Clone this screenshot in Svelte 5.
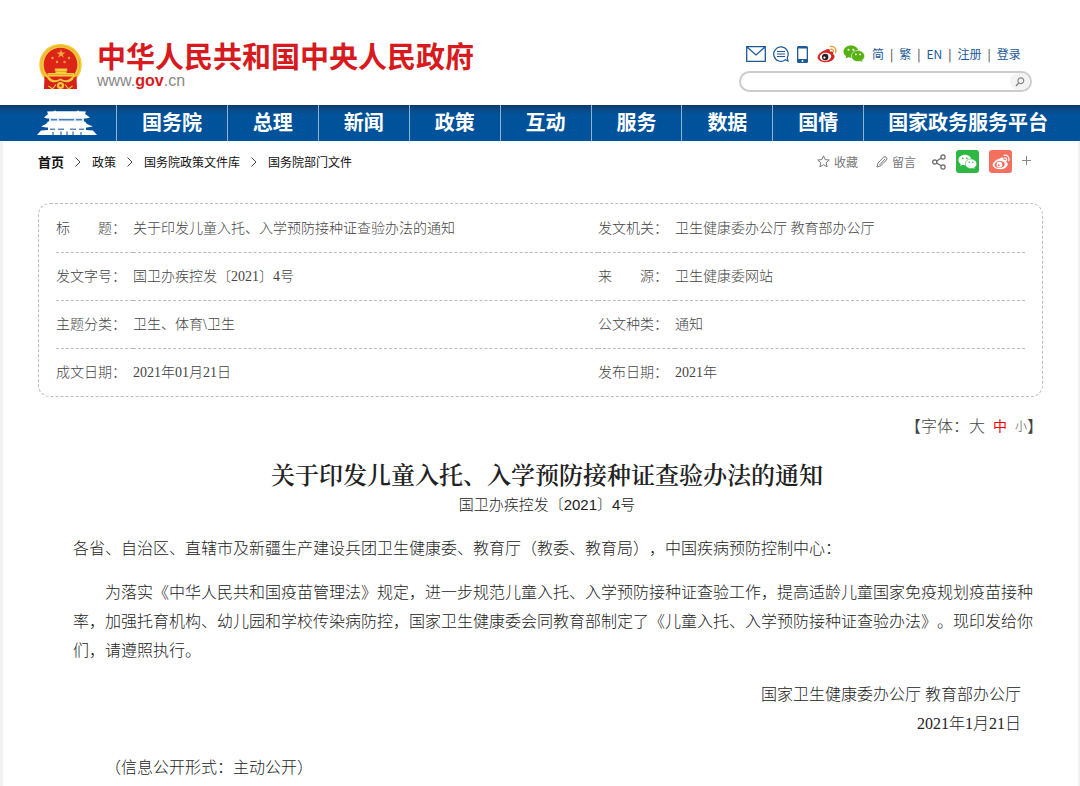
<script lang="ts">
  type Field = { label: string; value: string };

  const nav = ['国务院', '总理', '新闻', '政策', '互动', '服务', '数据', '国情', '国家政务服务平台'];
  const langs = ['简', '繁', 'EN', '注册', '登录'];
  const crumbs = ['首页', '政策', '国务院政策文件库', '国务院部门文件'];

  const rows: [Field, Field][] = [
    [
      { label: '标　　题：', value: '关于印发儿童入托、入学预防接种证查验办法的通知' },
      { label: '发文机关：', value: '卫生健康委办公厅 教育部办公厅' }
    ],
    [
      { label: '发文字号：', value: '国卫办疾控发〔2021〕4号' },
      { label: '来　　源：', value: '卫生健康委网站' }
    ],
    [
      { label: '主题分类：', value: '卫生、体育\\卫生' },
      { label: '公文种类：', value: '通知' }
    ],
    [
      { label: '成文日期：', value: '2021年01月21日' },
      { label: '发布日期：', value: '2021年' }
    ]
  ];

  const sizes = [
    { id: 'large', text: '大' },
    { id: 'medium', text: '中' },
    { id: 'small', text: '小' }
  ];

  let query = $state('');
  let size = $state('medium');
</script>

{#snippet weibo(body: string, wave: string, eye: string)}
  <path d="M8.500 5C11.500 3 13.500 4.500 12.800 6.800C15.200 6 16.800 7 15.900 9C18.500 10.200 18 13.500 15 15.500C10.500 18.500 2 17.500 .7 13C0 10 4.500 6.300 8.500 5Z" fill={body} />
  <ellipse cx="8.500" cy="11.800" rx="5.800" ry="4" fill={eye} transform="rotate(-8 8.500 11.800)" />
  <circle cx="8.200" cy="12" r="3.200" fill={body === '#fff' ? '#fff' : '#222'} />
  <circle cx="7.400" cy="12.600" r="1.100" fill={eye} />
  <path d="M13.500 1.500C17.500 .8 19.800 4 18.600 7.500M13.800 4.300C15.600 4 16.700 5.300 16.200 6.900" fill="none" stroke={wave} stroke-width="1.400" stroke-linecap="round" />
{/snippet}

{#snippet wechat(fill: string, eye: string)}
  <path d="M8 .5C3.800 .5 .5 3.200 .5 6.600C.5 8.600 1.500 10.200 3.200 11.300L2.500 13.500L5.200 12.200C6.200 12.500 7.100 12.700 8 12.700C12.200 12.700 15.500 10 15.500 6.600C15.500 3.200 12.200 .5 8 .5Z" {fill} />
  <path d="M15 5.500C11.200 5.500 8.400 8 8.400 11C8.400 14.100 11.300 16.600 15 16.600C15.800 16.600 16.600 16.500 17.300 16.200L19.700 17.500L19.100 15.400C20.600 14.400 21.600 12.800 21.600 11C21.600 8 18.700 5.500 15 5.500Z" {fill} stroke={eye} stroke-width=".6" />
  <g fill={eye}>
    <circle cx="5.500" cy="4.800" r="1" /><circle cx="10.300" cy="4.800" r="1" />
    <circle cx="12.900" cy="9.400" r=".9" /><circle cx="17.100" cy="9.400" r=".9" />
  </g>
{/snippet}

<header>
  <a class="brand" href="#home">
    <svg width="43" height="46" viewBox="0 0 43 46" aria-hidden="true">
      <path d="M21.500 0C9.500 0 .3 9 .3 20.500C.3 28 3.500 33 7.500 37H35.500C39.500 33 42.700 28 42.700 20.500C42.700 9 33.500 0 21.500 0Z" fill="#f5c93a" />
      <path d="M21.500 2C11 2 2.300 10 2.300 20.500C2.300 27 5 31 8 34M21.500 2C32 2 40.700 10 40.700 20.500C40.700 27 38 31 35 34" fill="none" stroke="#e5a52f" stroke-width=".8" />
      <circle cx="21.500" cy="20.500" r="16.800" fill="#dd2419" />
      <path d="M22 5.200L23.100 8.400H26.500L23.800 10.400L24.800 13.600L22 11.700L19.200 13.600L20.200 10.400L17.500 8.400H20.900Z" fill="#f7a93c" />
      <g fill="#f7a93c">
        <circle cx="13.500" cy="14" r="1.200" /><circle cx="30" cy="14" r="1.200" />
        <circle cx="18" cy="18" r="1.200" /><circle cx="25.500" cy="18" r="1.200" />
      </g>
      <path d="M16 24.500H28L28.500 26.500H27.500V29H35V32.500H8.500V29H16.500V26.500H15.500Z" fill="#f7cf3c" />
      <path d="M16.500 27.500H27.500M9 30.500H34" stroke="#e8872a" stroke-width=".6" />
      <path d="M5.500 32C11 37 16 33 21.500 36C27 33 32 37 37.500 32L38 45H5L5.500 32Z" fill="#d5201b" />
      <path d="M9 34C13 38.500 17 38 21.500 35.500C26 38 30 38.500 34 34" fill="none" stroke="#f6ca3a" stroke-width="2" />
      <path d="M9.500 42L13.500 45L17 40.500M33.500 42L29.500 45L26 40.500" fill="none" stroke="#f6ca3a" stroke-width="1.200" />
      <circle cx="21.500" cy="41.500" r="3.500" fill="#f6ca3a" />
      <circle cx="21.500" cy="41.500" r="1.300" fill="#d5201b" />
    </svg>
    <span class="brand-text">
      <strong>中华人民共和国中央人民政府</strong>
      <span class="domain">www.<b>gov</b>.cn</span>
    </span>
  </a>

  <div class="tools">
    <div class="links">
      <a href="#mail" aria-label="邮箱">
        <svg width="20" height="16" viewBox="0 0 20 16"><path d="M.7 .7H19.300V15.300H.7ZM1 1L10 9L19 1" fill="none" stroke="#1c5a98" stroke-width="1.300" /></svg>
      </a>
      <a href="#chat" aria-label="客户端">
        <svg width="16" height="16" viewBox="0 0 16 16" fill="none" stroke="#1c5a98" stroke-width="1.200"><path d="M12.500 13.700A7.200 7.200 0 1 1 14.300 11.500L15 15ZM4 5.500H12M4 8H12M4 10.500H12" /></svg>
      </a>
      <a class="phone" href="#phone" aria-label="手机版">
        <svg width="11" height="17" viewBox="0 0 11 17"><rect width="11" height="17" rx="1.500" fill="#1c5a98" /><path d="M1.300 2.500H9.700V13H1.300Z" fill="#fff" /><circle cx="5.500" cy="15" r=".9" fill="#fff" /></svg>
      </a>
      <a class="weibo" href="#weibo" aria-label="微博">
        <svg width="20" height="18" viewBox="0 0 20 18">{@render weibo('#d8231f', '#f09a37', '#fff')}</svg>
      </a>
      <a href="#wechat" aria-label="微信">
        <svg width="22" height="18" viewBox="0 0 22 18">{@render wechat('#55b211', '#fff')}</svg>
      </a>
      <span class="langs">
        {#each langs as lang, i}
          {#if i > 0}<i>|</i>{/if}
          <a href="#{lang}">{lang}</a>
        {/each}
      </span>
    </div>
    <form class="search" onsubmit={(e) => e.preventDefault()}>
      <input type="text" aria-label="搜索" bind:value={query} />
      <button aria-label="提交搜索">
        <svg width="10" height="10" viewBox="0 0 10 10" fill="none" stroke="#888"><circle cx="5.800" cy="3.800" r="2.900" stroke-width="1.200" /><path d="M3.700 6L1 9" stroke-width="1.500" /></svg>
      </button>
    </form>
  </div>
</header>

<nav>
  <a class="home" href="#home" aria-label="首页">
    <svg width="60" height="26" viewBox="0 0 60 26" fill="#fff">
      <path d="M10 1.500L17 1.300L18 .3L19 1.300H40L41 .3L42 1.300L49 1.500L48 4L53 7.500L49 8.500H10L7 7.500L11 4Z" />
      <path d="M12 8H47V12H12Z" fill="#dcebf7" />
      <path d="M11 11.500H48L50 14L56 16.500L50 17.500H9L4 16.500L9 14Z" />
      <path d="M11 17H49V21H11Z" />
      <path d="M4 20.500L11 20H49L56 20.500L60 25H0Z" />
      <path d="M14 9.800H20M22 9.800H37M39 9.800H45M13 19.200H18M21 19.200H27M33 19.200H39M42 19.200H47" stroke="#0b529a" stroke-width="1" />
      <path d="M16 22V25M24 21.500V25M30 21.500V25M36 21.500V25M44 22V25" stroke="#0b529a" stroke-width="1" />
    </svg>
  </a>
  {#each nav as item, i}
    <a href="#{item}" class:first={i === 0} class:wide={i === nav.length - 1}>{item}</a>
  {/each}
</nav>

<main>
  <div class="bar">
    <div class="crumbs">
      {#each crumbs as crumb, i}
        {#if i > 0}
          <svg width="6" height="10" viewBox="0 0 6 10" aria-hidden="true"><path d="M.5 .5L5 5L.5 9.500" fill="none" stroke="#444" /></svg>
        {/if}
        <a href="#{crumb}" class:strong={i === 0}>{crumb}</a>
      {/each}
    </div>
    <div class="share">
      <button class="action">
        <svg width="13" height="13" viewBox="0 0 13 13"><path d="M6.500 .8L8.200 4.600L12.300 5L9.200 7.700L10.100 11.900L6.500 9.700L2.900 11.900L3.800 7.700L.7 5L4.800 4.600Z" fill="none" stroke="#777" /></svg>
        收藏
      </button>
      <button class="action">
        <svg width="12" height="12" viewBox="0 0 12 12"><path d="M1 11L2 7L7.500 1.200Q9 .2 10.300 1.300Q11.500 2.500 10.400 4L4.800 9.800ZM3.500 9L9 3" fill="none" stroke="#777" /></svg>
        留言
      </button>
      <button class="share-icon" aria-label="分享">
        <svg width="14" height="16" viewBox="0 0 14 16" fill="none" stroke="#666" stroke-width="1.200"><circle cx="2.800" cy="8" r="2.100" /><circle cx="11" cy="3" r="2.100" /><circle cx="11" cy="13" r="2.100" /><path d="M4.600 7L9.200 4.200M4.600 9L9.200 11.800" /></svg>
      </button>
      <button class="tile green" aria-label="分享到微信">
        <svg width="19" height="16" viewBox="0 0 22 18">{@render wechat('#fff', '#2fb744')}</svg>
      </button>
      <button class="tile coral" aria-label="分享到微博">
        <svg width="18" height="16" viewBox="0 0 20 18">{@render weibo('#fff', '#fff', '#f56f61')}</svg>
      </button>
      <button aria-label="更多">
        <svg width="9" height="11" viewBox="0 0 9 11"><path d="M4.500 0V9M0 4.500H9" stroke="#888" /></svg>
      </button>
    </div>
  </div>

  <div class="meta">
    <table>
      <tbody>
        {#each rows as [left, right]}
          <tr>
            <th scope="row">{left.label}</th>
            <td class="main-col">{left.value}</td>
            <th scope="row">{right.label}</th>
            <td>{right.value}</td>
          </tr>
        {/each}
      </tbody>
    </table>
  </div>

  <div class="font-size">
    【字体：{#each sizes as s}<button class={s.id} class:active={size === s.id} onclick={() => (size = s.id)}>{s.text}</button>{/each}】
  </div>

  <article>
    <h1>关于印发儿童入托、入学预防接种证查验办法的通知</h1>
    <p class="doc-no">国卫办疾控发〔2021〕4号</p>
    <p>各省、自治区、直辖市及新疆生产建设兵团卫生健康委、教育厅（教委、教育局），中国疾病预防控制中心：</p>
    <p class="indent">为落实《中华人民共和国疫苗管理法》规定，进一步规范儿童入托、入学预防接种证查验工作，提高适龄儿童国家免疫规划疫苗接种率，加强托育机构、幼儿园和学校传染病防控，国家卫生健康委会同教育部制定了《儿童入托、入学预防接种证查验办法》。现印发给你们，请遵照执行。</p>
    <p class="sign">国家卫生健康委办公厅 教育部办公厅<br />2021年1月21日</p>
    <p class="indent">（信息公开形式：主动公开）</p>
  </article>
</main>

<style>
  :global(body) { background: #fff; }
  :global(#app) {
    font-family: 'Liberation Sans', 'Noto Sans CJK SC', sans-serif;
    text-spacing-trim: space-all;
    overflow: hidden;
  }
  a { color: inherit; text-decoration: none; }
  button { padding: 0; border: 0; background: none; font: inherit; color: inherit; cursor: pointer; }
  svg { display: block; flex: none; }

  header {
    display: flex;
    justify-content: space-between;
    box-sizing: border-box;
    height: 105px;
    padding: 40px 48px 0 39px;
  }
  .brand { display: flex; align-items: flex-start; gap: 15px; }
  .brand svg { margin-top: 4px; }
  .brand-text { display: flex; flex-direction: column; padding-top: 2px; }
  .brand strong { font-size: 29px; line-height: 32px; color: #d71a20; white-space: nowrap; }
  .domain { font-size: 16px; line-height: 14px; color: #888; }
  .domain b { color: #d71a20; }

  .tools { width: 293px; }
  .links { display: flex; align-items: center; height: 28px; padding-left: 7px; }
  .links a { margin-right: 7px; }
  .links .phone { margin: 0 9px 0 1px; }
  .links .weibo { margin-right: 6px; }
  .langs {
    display: flex;
    gap: 6px;
    font-family: 'Noto Sans CJK SC', sans-serif;
    font-size: 12px;
    line-height: 18px;
    color: #1c5a98;
  }
  .langs a { margin: 0; white-space: nowrap; }
  .langs i { font-style: normal; color: #333; }

  .search {
    display: flex;
    align-items: center;
    box-sizing: border-box;
    height: 21px;
    margin-top: 3px;
    border: 2px solid #ccc;
    border-radius: 11px;
    overflow: hidden;
  }
  .search input { flex: 1; min-width: 0; height: 17px; padding: 0 10px; border: 0; outline: 0; background: none; }
  .search button {
    display: grid;
    place-items: center;
    width: 20px;
    height: 17px;
    border-radius: 9px;
    background: #f3f3f3;
  }

  nav {
    display: flex;
    height: 36px;
    background: linear-gradient(#0b3a68, #0a4a8a 5px, #00529a 10px);
    font-size: 20px;
    font-weight: bold;
    line-height: 37px;
    text-align: center;
    color: #fff;
  }
  nav a { flex: 1 1 91px; box-sizing: border-box; border-left: 1px solid #8fb2d3; white-space: nowrap; }
  nav .home { flex: 0 0 116px; display: flex; align-items: center; padding-left: 37px; border: 0; }
  nav .first { flex-basis: 111px; }
  nav .wide { flex-basis: 217px; padding-right: 8px; }

  main {
    min-height: 645px;
    padding: 0 35px;
    border: solid #f2f2f2;
    border-width: 0 2px 0 3px;
    box-sizing: border-box;
  }

  .bar { display: flex; justify-content: space-between; align-items: center; height: 41px; font-size: 12px; }
  .crumbs { display: flex; align-items: center; gap: 11px; color: #111; }
  .crumbs .strong { font-size: 13px; font-weight: bold; }
  .share { display: flex; align-items: center; gap: 10px; padding-right: 12px; color: #777; }
  .action { display: flex; align-items: center; gap: 4px; margin-right: 8px; }
  .share-icon { margin-left: -2px; }
  .tile { display: grid; place-items: center; width: 23px; height: 23px; border-radius: 3px; }
  .green { background: #2fb744; }
  .coral { background: #f56f61; }

  .meta {
    margin-top: 21px;
    padding: 0 17px;
    border: 1px dashed #bbb;
    border-radius: 12px;
  }
  table {
    width: 100%;
    border-collapse: collapse;
    table-layout: fixed;
    font-family: 'Liberation Serif', 'Noto Sans CJK SC', sans-serif;
    font-size: 14px;
    color: #444;
  }
  tr + tr { border-top: 1px dashed #bbb; }
  th { width: 77px; }
  .main-col { width: 48%; }
  th, td {
    box-sizing: border-box;
    height: 48px;
    padding: 0 0 2px;
    font-weight: 300;
    text-align: left;
    white-space: nowrap;
  }

  .font-size {
    display: flex;
    justify-content: flex-end;
    align-items: center;
    height: 24px;
    margin-top: 16px;
    font-size: 16px;
    font-weight: 300;
    color: #444;
  }
  .font-size .medium { margin: 0 8px; font-size: 14px; }
  .font-size .small { font-size: 12px; }
  .font-size .active { font-weight: 400; color: #e00; }

  article {
    padding: 0 6px 0 35px;
    font-family: 'Liberation Serif', 'Noto Sans CJK SC', sans-serif;
    font-size: 16px;
    font-weight: 300;
    line-height: 29px;
    color: #222;
  }
  h1 {
    margin: 21px 16px 0 0;
    font-family: 'Noto Serif CJK SC', 'Noto Sans CJK SC', serif;
    font-size: 24px;
    font-weight: 600;
    line-height: 32px;
    text-align: center;
  }
  p { margin: 0 0 15px; }
  .doc-no {
    margin: 0 16px 15px 0;
    font-family: 'Liberation Sans', 'Noto Sans CJK SC', sans-serif;
    font-size: 15px;
    text-align: center;
  }
  .indent { text-indent: 2em; }
  .sign { padding-right: 16px; text-align: right; }
</style>
